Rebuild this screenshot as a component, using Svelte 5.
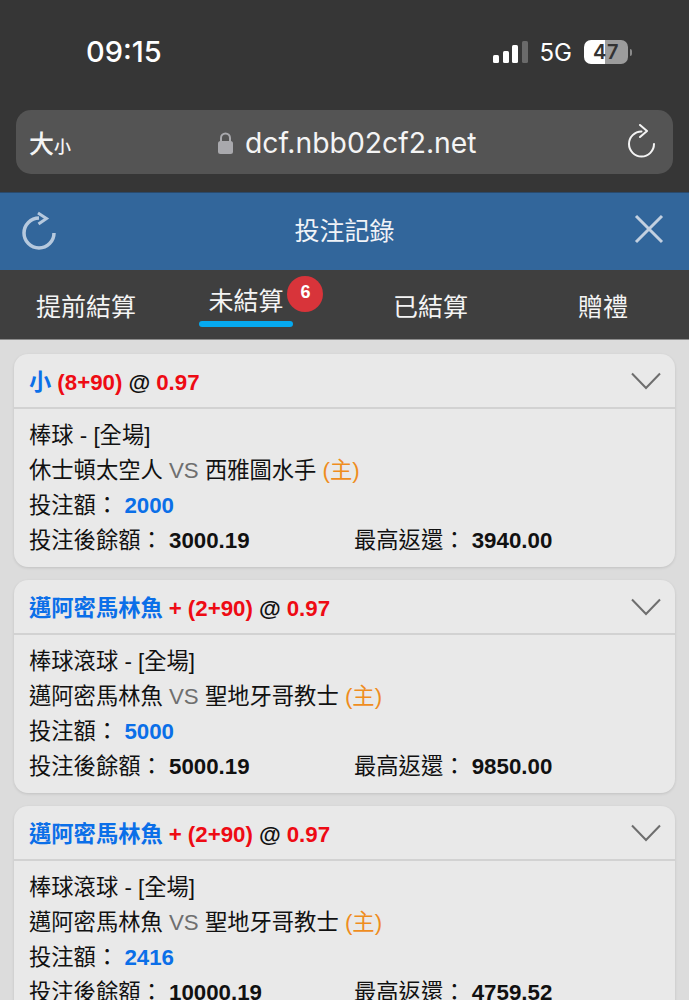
<script>
  const tabs = [
    { label: '提前結算' },
    { label: '未結算', active: true, badge: 6 },
    { label: '已結算' },
    { label: '贈禮' }
  ];

  const bets = [
    { pick: '小', line: '(8+90)', plus: false, odds: '0.97', sport: '棒球 - [全場]', home: '休士頓太空人', away: '西雅圖水手', stake: '2000', balance: '3000.19', payout: '3940.00' },
    { pick: '邁阿密馬林魚', line: '(2+90)', plus: true, odds: '0.97', sport: '棒球滾球 - [全場]', home: '邁阿密馬林魚', away: '聖地牙哥教士', stake: '5000', balance: '5000.19', payout: '9850.00' },
    { pick: '邁阿密馬林魚', line: '(2+90)', plus: true, odds: '0.97', sport: '棒球滾球 - [全場]', home: '邁阿密馬林魚', away: '聖地牙哥教士', stake: '2416', balance: '10000.19', payout: '4759.52' }
  ];
</script>

<div class="page">
  <div class="chrome">
    <div class="status">
      <span class="time">09:15</span>
      <div class="status-right">
        <div class="signal">
          <i class="b1"></i><i class="b2"></i><i class="b3"></i><i class="b4"></i>
        </div>
        <span class="net">5G</span>
        <div class="battery"><span>47</span></div>
        <i class="nub"></i>
      </div>
    </div>
    <div class="urlbar">
      <span class="size"><b>大</b><small>小</small></span>
      <div class="url">
        <svg width="17" height="24" viewBox="0 0 17 24">
          <path d="M4 11V7a4.500 4.500 0 0 1 9 0v4" fill="none" stroke="#a9a9ad" stroke-width="2" />
          <rect x="1" y="10" width="15" height="13" rx="2.500" fill="#a9a9ad" />
        </svg>
        <span>dcf.nbb02cf2.net</span>
      </div>
      <svg width="30" height="36" viewBox="0 0 30 36" fill="none" stroke="#f4f4f4" stroke-width="2" stroke-linecap="round" stroke-linejoin="round">
        <path d="M14.500 7.500A12.500 12.500 0 1 0 27 20" />
        <path d="M13 1L20 7L13 13" />
      </svg>
    </div>
  </div>

  <header class="title">
    <svg width="40" height="42" viewBox="0 0 40 42" fill="none" stroke="#b6c9de" stroke-width="3.500">
      <path d="M19 7A15 15 0 1 0 34 22" />
      <path d="M18 2L26.500 7.500L18.500 13" stroke-width="3" />
    </svg>
    <h1>投注記錄</h1>
    <svg class="close" width="32" height="32" viewBox="0 0 32 32" stroke="#c3d0e0" stroke-width="3">
      <path d="M3 3L29 29M29 3L3 29" />
    </svg>
  </header>

  <nav class="tabs">
    {#each tabs as tab}
      <div class="tab" class:active={tab.active}>
        <span class="tab-label">
          {tab.label}
          {#if tab.badge}<em class="badge">{tab.badge}</em>{/if}
        </span>
      </div>
    {/each}
  </nav>

  <main class="list">
    {#each bets as bet}
      <article class="card">
        <div class="card-head">
          <div class="pick">
            <span class="blue">{bet.pick}</span>
            {#if bet.plus}<span class="red">+</span>{/if}
            <span class="red">{bet.line}</span>
            <span class="black">@</span>
            <span class="red">{bet.odds}</span>
          </div>
          <svg width="30" height="18" viewBox="0 0 30 18" fill="none" stroke="#6e6e6e" stroke-width="2">
            <path d="M1 1.500L15 16L29 1.500" />
          </svg>
        </div>
        <div class="card-body">
          <div class="row">{bet.sport}</div>
          <div class="row">{bet.home} <span class="vs">VS</span> {bet.away} <span class="host">(主)</span></div>
          <div class="row">投注額： <strong class="blue">{bet.stake}</strong></div>
          <div class="row split">
            <span class="col">投注後餘額： <strong>{bet.balance}</strong></span>
            <span class="col">最高返還： <strong>{bet.payout}</strong></span>
          </div>
        </div>
      </article>
    {/each}
  </main>
</div>

<style>
  :global(body) {
    background: #dcdcdc;
    overflow: hidden;
  }

  .page {
    width: 689px;
    height: 1000px;
    overflow: hidden;
    font-family: "Liberation Sans", "Noto Sans CJK TC", sans-serif;
  }

  .chrome {
    height: 192px;
    box-sizing: border-box;
    background: #363636;
    padding: 31px 16px 0;
  }

  .status {
    height: 42px;
    display: flex;
    align-items: center;
    justify-content: space-between;
    padding: 0 41px 0 70px;
    margin-bottom: 37px;
    color: #fff;
  }

  .time {
    font-family: Inter, "Liberation Sans", sans-serif;
    font-size: 29px;
    font-weight: 500;
    margin-top: -2px;
  }

  .status-right {
    display: flex;
    align-items: center;
  }

  .signal {
    display: flex;
    align-items: flex-end;
    gap: 3.400px;
    height: 22px;
    margin-right: 12px;
  }

  .signal i {
    width: 6px;
    border-radius: 1.500px;
    background: #fff;
  }

  .b1 { height: 8px; }
  .b2 { height: 12px; }
  .b3 { height: 18px; }
  .signal .b4 { height: 22px; background: #6a6a6a; }

  .net {
    font-family: Inter, "Liberation Sans", sans-serif;
    font-size: 24px;
    margin-right: 12px;
  }

  .battery {
    width: 44px;
    height: 24px;
    border-radius: 7px;
    background: linear-gradient(90deg, #fff 0 47%, #9c9c9c 47% 100%);
    display: flex;
    align-items: center;
    justify-content: center;
  }

  .battery span {
    font-family: Inter, "Liberation Sans", sans-serif;
    font-size: 20px;
    font-weight: 600;
    color: #333;
    letter-spacing: 0.500px;
  }

  .nub {
    width: 2px;
    height: 7px;
    margin-left: 2px;
    border-radius: 0 2px 2px 0;
    background: #8a8a8a;
  }

  .urlbar {
    height: 64px;
    border-radius: 15px;
    background: #545454;
    display: flex;
    align-items: center;
    position: relative;
    padding: 0 16px 0 13px;
    justify-content: space-between;
    color: #f4f4f4;
  }

  .size {
    display: flex;
    align-items: flex-end;
    font-family: "Noto Sans CJK TC", sans-serif;
    line-height: 1;
  }

  .size b {
    font-size: 25px;
    font-weight: 500;
  }

  .size small {
    font-size: 17px;
    font-weight: 500;
    margin-bottom: 1px;
  }

  .url {
    position: absolute;
    left: 201px;
    top: 1px;
    height: 64px;
    display: flex;
    align-items: center;
    gap: 11px;
    font-family: Inter, "Liberation Sans", sans-serif;
    font-size: 28.300px;
  }

  .title {
    height: 78px;
    box-sizing: border-box;
    background: #32669b;
    border-top: 1px solid #2a4a6c;
    display: flex;
    align-items: center;
    justify-content: space-between;
    padding: 0 24px 0 20px;
    position: relative;
  }

  .title h1 {
    position: absolute;
    left: 0;
    right: 0;
    margin: -6px 0 0;
    text-align: center;
    font-family: "Noto Sans CJK TC", sans-serif;
    font-size: 25px;
    font-weight: 400;
    color: #f0f3f7;
  }

  .close {
    margin-top: -5px;
  }

  .tabs {
    height: 70px;
    box-sizing: border-box;
    background: #3f3f3f;
    border-bottom: 1px solid #8c8c8c;
    display: grid;
    grid-template-columns: 172px 172px 173px 172px;
    color: #f4f4f4;
    font-family: "Noto Sans CJK TC", sans-serif;
    font-size: 25px;
  }

  .tab {
    display: flex;
    justify-content: center;
    padding-top: 17px;
  }

  .tab-label {
    position: relative;
    height: 36px;
    line-height: 36px;
  }

  .tab.active {
    padding-top: 11px;
    padding-right: 24px;
  }

  .tab.active .tab-label::after {
    content: '';
    position: absolute;
    left: -9px;
    right: -9px;
    top: 40px;
    height: 6px;
    border-radius: 3px;
    background: #05a9f0;
  }

  .badge {
    position: absolute;
    left: 79px;
    top: -5px;
    width: 36px;
    height: 36px;
    display: block;
    border-radius: 50%;
    background: #d8343a;
    color: #fff;
    font-family: "Liberation Sans", sans-serif;
    font-size: 18px;
    font-style: normal;
    font-weight: 700;
    text-align: center;
    line-height: 32px;
  }

  .list {
    display: flex;
    flex-direction: column;
    gap: 13px;
    padding: 14px;
  }

  .card {
    height: 213px;
    flex: none;
    border-radius: 14px;
    background: #e9e9e9;
    box-shadow: 0 1px 3px rgba(0, 0, 0, 0.12);
    color: #111;
  }

  .card-head {
    height: 55px;
    box-sizing: border-box;
    border-bottom: 2px solid #d2d2d2;
    display: flex;
    align-items: center;
    justify-content: space-between;
    padding: 0 14px 0 15px;
  }

  .card-head svg {
    margin-top: 1px;
  }

  .pick {
    font-size: 22.300px;
    font-weight: 700;
    display: flex;
    align-items: baseline;
    gap: 6px;
    margin-top: -2px;
  }

  .blue {
    color: #0b6fe8;
  }

  .red {
    color: #ee0b14;
  }

  .black {
    color: #111;
  }

  .card-body {
    padding: 9px 15px 0;
    font-size: 22.300px;
  }

  .row {
    height: 35px;
    line-height: 35px;
    white-space: nowrap;
  }

  .split {
    display: grid;
    grid-template-columns: 325px 1fr;
  }

  .vs {
    color: #6f6f6f;
  }

  .host {
    color: #ef8d1e;
  }

  strong {
    font-weight: 700;
  }
</style>
